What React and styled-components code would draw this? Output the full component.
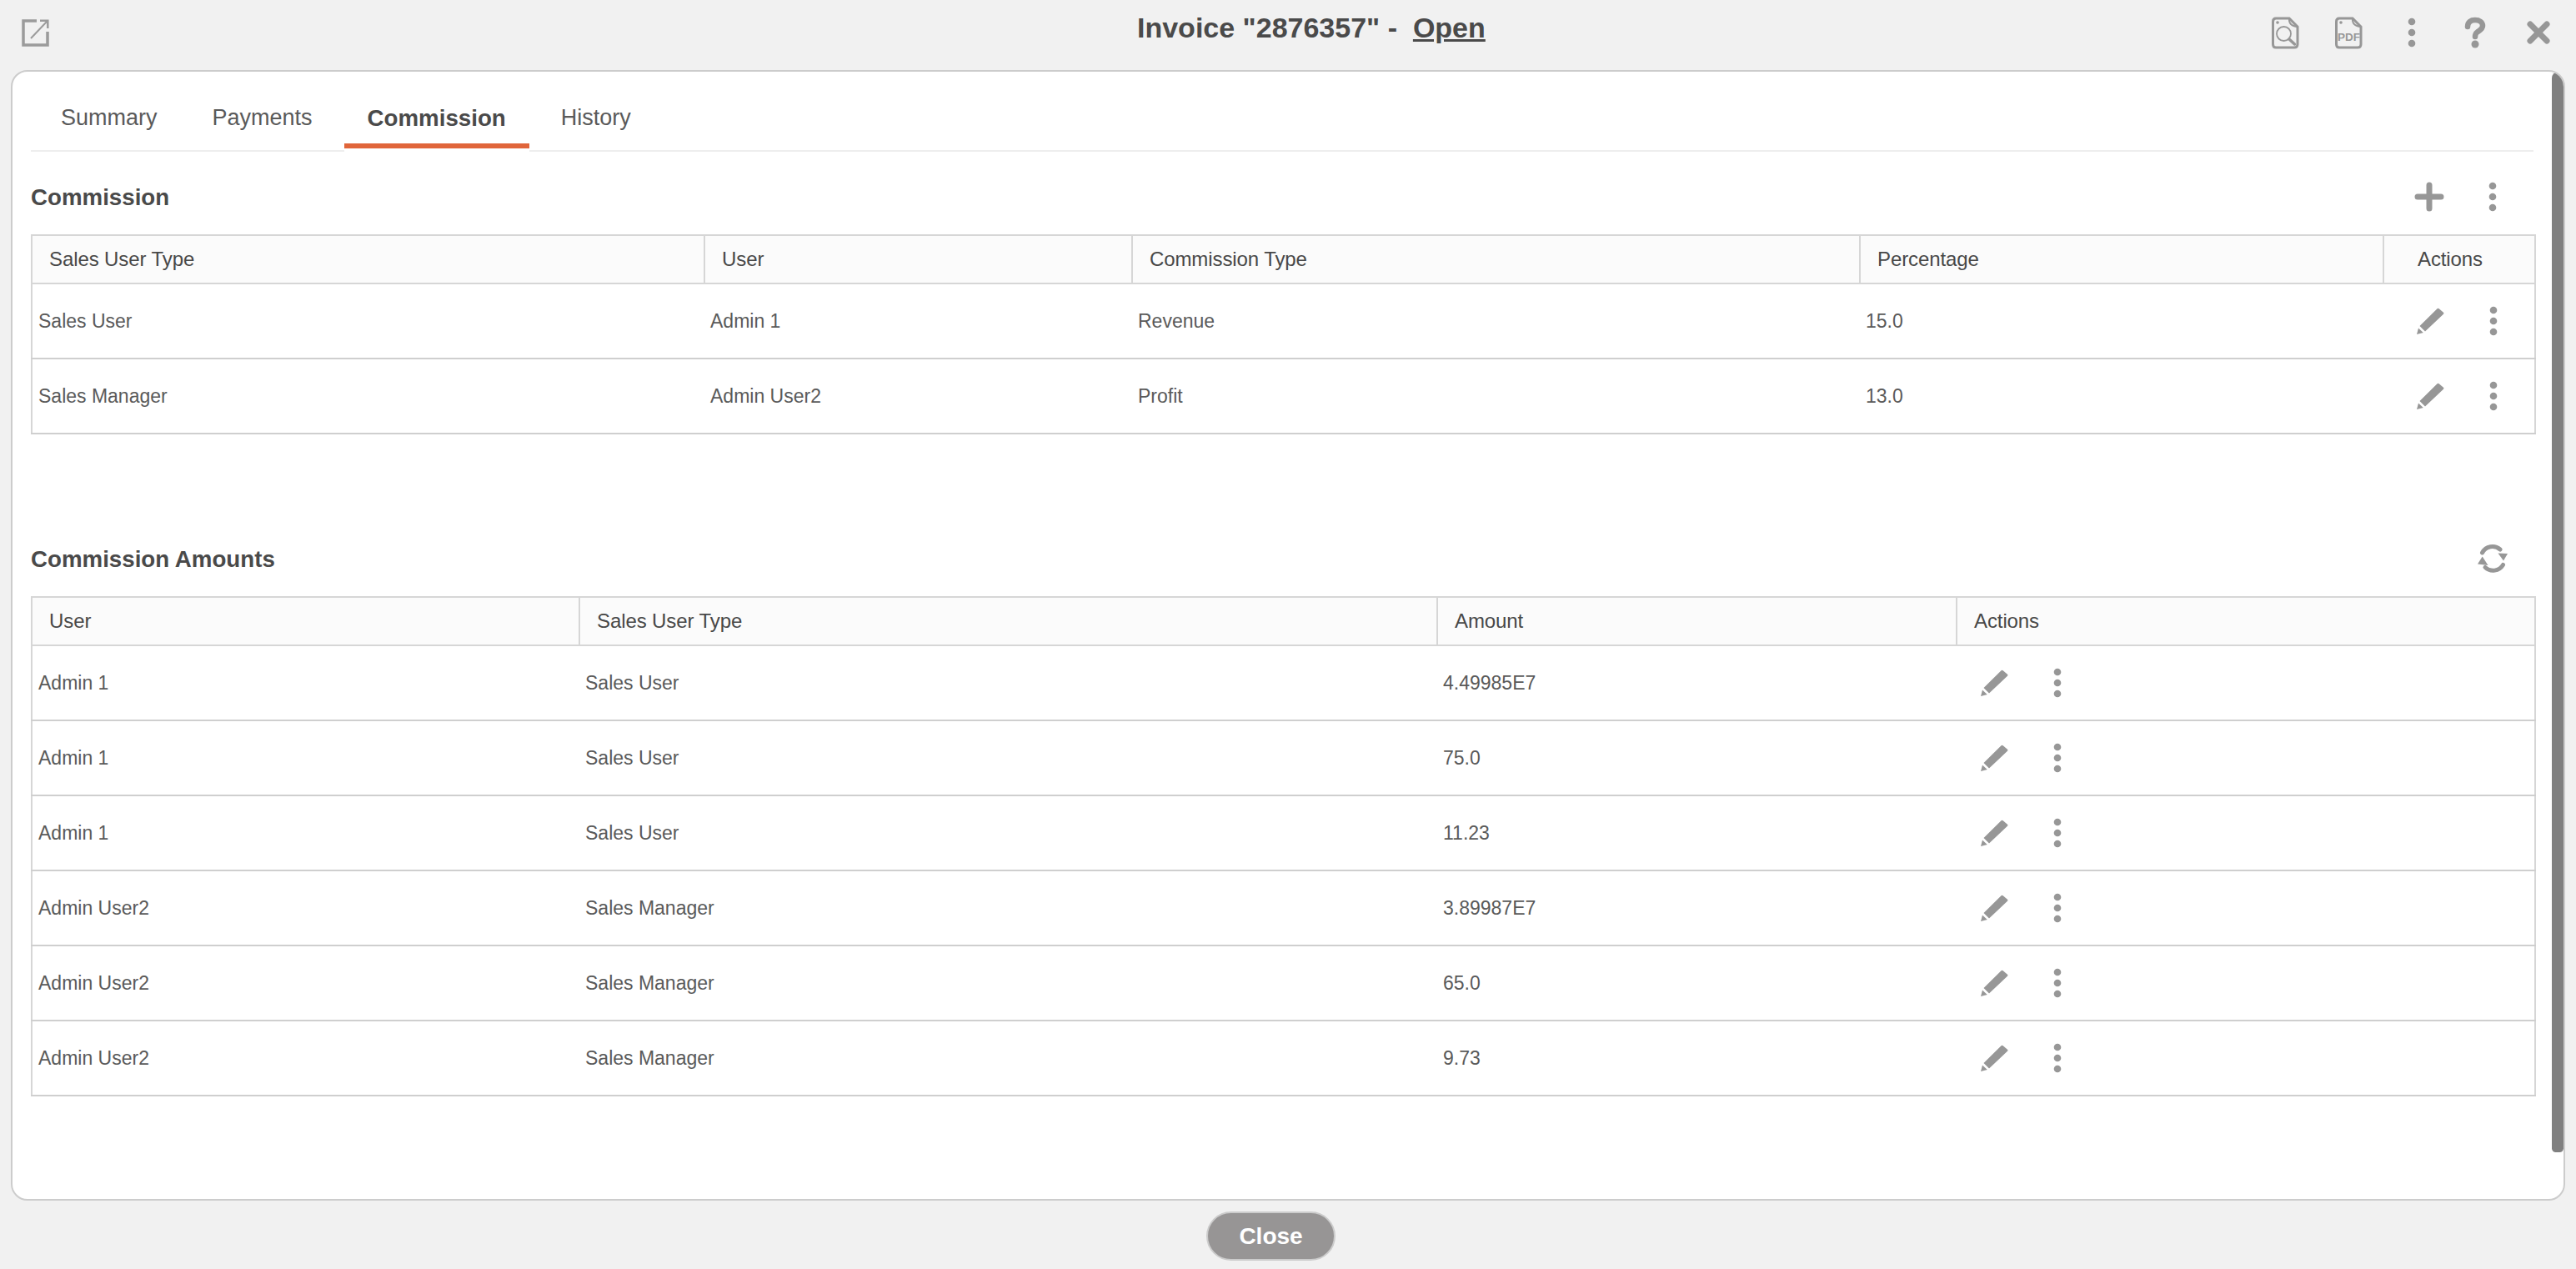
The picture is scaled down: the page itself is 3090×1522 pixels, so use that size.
import React from 'react';
import styled, { createGlobalStyle } from 'styled-components';

const GlobalStyle = createGlobalStyle`
    html, body {
        margin: 0;
        height: 100%;
        overflow: hidden;
        background: #f1f1f1;
    }
    body {
        font-family: "Liberation Sans", Arial, sans-serif;
        color: #555;
    }
`;

const Page = styled.div`
    display: flex;
    flex-direction: column;
    height: 1522px;
`;

const TopBar = styled.header`
    display: flex;
    align-items: center;
    height: 84px;
    padding: 0 7px 6px 26px;
    box-sizing: border-box;
    flex-shrink: 0;
`;

const Title = styled.h1`
    align-self: flex-start;
    margin: 0 0 0 1305px;
    font-size: 34px;
    line-height: 66px;
    font-weight: 700;
    color: #4a4a4a;
    white-space: pre;

    a {
        color: inherit;
        text-decoration: underline;
    }
`;

const TopActions = styled.div`
    display: flex;
    align-items: center;
    margin-left: auto;
`;

const IconBox = styled.span`
    display: flex;
    align-items: center;
    justify-content: center;
    width: 76px;
    flex-shrink: 0;
    color: #979797;
`;

const Panel = styled.main`
    position: relative;
    height: 1356px;
    margin: 0 13px;
    padding: 0 36px 0 22px;
    box-sizing: border-box;
    flex-shrink: 0;
    background: #fff;
    border: 2px solid #ccc;
    border-radius: 20px;
    overflow: hidden;
`;

const ScrollThumb = styled.div`
    position: absolute;
    top: 0;
    right: 0;
    width: 14px;
    height: 1296px;
    background: #808080;
    border-radius: 10px 8px 6px 6px;
`;

const TabBar = styled.nav`
    display: flex;
    gap: 10px;
    height: 96px;
    padding: 0 0 2px 8px;
    box-sizing: border-box;
    border-bottom: 2px solid #eee;
`;

const Tab = styled.div`
    display: flex;
    align-items: center;
    height: 92px;
    padding: 25px 28px 0;
    box-sizing: border-box;
    font-size: ${p => (p.$active ? 27.7 : 27)}px;
    font-weight: ${p => (p.$active ? 700 : 400)};
    color: ${p => (p.$active ? '#4a4a4a' : '#5a5a5a')};
    border-bottom: 6px solid ${p => (p.$active ? '#e0653a' : 'transparent')};
    box-shadow: ${p => (p.$active ? '0 5px 0 #fff' : 'none')};
`;

const SectionHead = styled.div`
    display: flex;
    align-items: center;
    justify-content: space-between;
    height: 91px;
    margin-top: ${p => p.$top}px;
    padding-right: 11px;
`;

const SectionTitle = styled.h2`
    margin: 0;
    padding-top: 2px;
    font-size: 27.7px;
    font-weight: 700;
    color: #4a4a4a;
`;

const HeadActions = styled.div`
    display: flex;
    align-items: center;
`;

const Table = styled.table`
    width: 3003px;
    table-layout: fixed;
    border-collapse: collapse;
    border: 2px solid #d6d6d6;
`;

const HeadRow = styled.tr`
    height: 58px;
    background: #fbfbfb;
`;

const Th = styled.th`
    padding: 0 ${p => (p.$center ? '22px' : '0')} 0 ${p => (p.$center ? '0' : '20px')};
    border: 2px solid #d6d6d6;
    font-size: 24px;
    font-weight: 400;
    letter-spacing: -0.1px;
    text-align: ${p => (p.$center ? 'center' : 'left')};
    color: #484848;
`;

const Row = styled.tr`
    height: 90px;
    border-bottom: 2px solid #cfcfcf;
`;

const Td = styled.td`
    padding: 0 0 0 7px;
    font-size: 23px;
    color: #5a5a5a;
`;

const RowActions = styled.div`
    display: flex;
    align-items: center;
    padding-left: ${p => p.$inset}px;
`;

const CloseBar = styled.footer`
    display: flex;
    justify-content: center;
    padding: 13px 41px 0 0;
`;

const CloseButton = styled.button`
    width: 155px;
    height: 59px;
    padding: 0;
    border: 2px solid #ccc;
    border-radius: 30px;
    background: #979595;
    font-family: inherit;
    font-size: 28px;
    font-weight: 700;
    color: #fff;
`;

const ExternalIcon = () => (
    <svg width="33" height="33" viewBox="0 0 33 33" fill="none" stroke="#9b9b9b" strokeWidth="3">
        <path d="M18 2H2V31H31V15" strokeWidth="3.5" />
        <path d="M11 23L30 3" strokeWidth="2" />
        <path d="M22 1.7H31.300V11" strokeWidth="2.500" />
    </svg>
);

const DocShape = () => (
    <>
        <path d="M5 2H21L31 12V33Q31 37 27 37H5Q1.500 37 1.500 33V6Q1.500 2 5 2Z" fill="none" stroke="currentColor" strokeWidth="3" />
        <path d="M21 2Q20 11 31 12" fill="none" stroke="currentColor" strokeWidth="2" />
        <circle cx="7" cy="7" r="1.800" fill="currentColor" />
    </>
);

const DocSearchIcon = () => (
    <svg width="33" height="39" viewBox="0 0 33 39">
        <DocShape />
        <circle cx="14.500" cy="20.500" r="8.500" fill="none" stroke="currentColor" strokeWidth="1.800" />
        <path d="M21 27L27.500 33" stroke="currentColor" strokeWidth="3.500" strokeLinecap="round" />
    </svg>
);

const PdfIcon = () => (
    <svg width="33" height="39" viewBox="0 0 33 39">
        <DocShape />
        <text x="16.500" y="29" textAnchor="middle" fontSize="13.500" fontWeight="700" fontFamily="Liberation Sans, Arial, sans-serif" fill="currentColor">PDF</text>
    </svg>
);

const DotsIcon = () => (
    <svg width="10" height="36" viewBox="0 0 10 36" fill="currentColor">
        <circle cx="5" cy="5" r="4.300" />
        <circle cx="5" cy="18" r="4.300" />
        <circle cx="5" cy="31" r="4.300" />
    </svg>
);

const QuestionIcon = () => (
    <svg width="26" height="38" viewBox="0 0 26 38" fill="none">
        <path d="M4 12C4 6 8 4 13 4C18 4 22 6.500 22 11C22 15 18 16.500 15.500 18.500C13.500 20 13 21.500 13 24" stroke="currentColor" strokeWidth="6.500" strokeLinecap="round" />
        <circle cx="13" cy="33" r="4.500" fill="currentColor" />
    </svg>
);

const CloseIcon = () => (
    <svg width="28" height="28" viewBox="0 0 28 28" stroke="currentColor" strokeWidth="7" strokeLinecap="round">
        <path d="M4 4L24 24M24 4L4 24" />
    </svg>
);

const PlusIcon = () => (
    <svg width="36" height="36" viewBox="0 0 36 36" stroke="currentColor" strokeWidth="7" strokeLinecap="round">
        <path d="M18 4V32M4 18H32" />
    </svg>
);

const PencilIcon = () => (
    <svg width="33" height="32" viewBox="0 0 33 32" fill="currentColor">
        <path d="M3.500 22L24.500 1.300Q25.500 0.300 26.700 1.200L32 5.700Q33 6.700 32 7.800L10 28.500Z" />
        <path d="M0 32L2 24.500L7.800 30Z" />
    </svg>
);

const RefreshIcon = () => (
    <svg width="36" height="36" viewBox="0 0 36 36" fill="currentColor">
        <path d="M5.500 11A14 14 0 0 1 27 7" fill="none" stroke="currentColor" strokeWidth="5" strokeLinecap="round" />
        <path d="M30.500 25.500A14 14 0 0 1 9 28.500" fill="none" stroke="currentColor" strokeWidth="5" strokeLinecap="round" />
        <path d="M36 12L24.500 11.500L31 20.500Z" />
        <path d="M0 24.500L5.700 15.500L12.500 26Z" />
    </svg>
);

const commissions = [
    ['Sales User', 'Admin 1', 'Revenue', '15.0'],
    ['Sales Manager', 'Admin User2', 'Profit', '13.0'],
];

const amounts = [
    ['Admin 1', 'Sales User', '4.49985E7'],
    ['Admin 1', 'Sales User', '75.0'],
    ['Admin 1', 'Sales User', '11.23'],
    ['Admin User2', 'Sales Manager', '3.89987E7'],
    ['Admin User2', 'Sales Manager', '65.0'],
    ['Admin User2', 'Sales Manager', '9.73'],
];

const EditActions = ({ inset }) => (
    <RowActions $inset={inset}>
        <IconBox>
            <PencilIcon />
        </IconBox>
        <IconBox>
            <DotsIcon />
        </IconBox>
    </RowActions>
);

function App() {
    return (
        <Page>
            <GlobalStyle />
            <TopBar>
                <ExternalIcon />
                <Title>
                    Invoice "2876357" -{'  '}
                    <a href="#open">Open</a>
                </Title>
                <TopActions>
                    <IconBox><DocSearchIcon /></IconBox>
                    <IconBox><PdfIcon /></IconBox>
                    <IconBox><DotsIcon /></IconBox>
                    <IconBox><QuestionIcon /></IconBox>
                    <IconBox><CloseIcon /></IconBox>
                </TopActions>
            </TopBar>

            <Panel>
                <ScrollThumb />
                <TabBar>
                    <Tab>Summary</Tab>
                    <Tab>Payments</Tab>
                    <Tab $active>Commission</Tab>
                    <Tab>History</Tab>
                </TabBar>

                <SectionHead $top={8}>
                    <SectionTitle>Commission</SectionTitle>
                    <HeadActions>
                        <IconBox><PlusIcon /></IconBox>
                        <IconBox><DotsIcon /></IconBox>
                    </HeadActions>
                </SectionHead>
                <Table>
                    <colgroup>
                        <col width="807" />
                        <col width="513" />
                        <col width="873" />
                        <col width="628" />
                        <col width="182" />
                    </colgroup>
                    <thead>
                        <HeadRow>
                            <Th>Sales User Type</Th>
                            <Th>User</Th>
                            <Th>Commission Type</Th>
                            <Th>Percentage</Th>
                            <Th $center>Actions</Th>
                        </HeadRow>
                    </thead>
                    <tbody>
                        {commissions.map(item => (
                            <Row key={item[0]}>
                                {item.map(text => (
                                    <Td key={text}>{text}</Td>
                                ))}
                                <Td>
                                    <EditActions inset={11} />
                                </Td>
                            </Row>
                        ))}
                    </tbody>
                </Table>

                <SectionHead $top={103}>
                    <SectionTitle>Commission Amounts</SectionTitle>
                    <HeadActions>
                        <IconBox><RefreshIcon /></IconBox>
                    </HeadActions>
                </SectionHead>
                <Table>
                    <colgroup>
                        <col width="657" />
                        <col width="1029" />
                        <col width="623" />
                        <col width="694" />
                    </colgroup>
                    <thead>
                        <HeadRow>
                            <Th>User</Th>
                            <Th>Sales User Type</Th>
                            <Th>Amount</Th>
                            <Th>Actions</Th>
                        </HeadRow>
                    </thead>
                    <tbody>
                        {amounts.map(item => (
                            <Row key={item[2]}>
                                {item.map(text => (
                                    <Td key={text}>{text}</Td>
                                ))}
                                <Td>
                                    <EditActions inset={0} />
                                </Td>
                            </Row>
                        ))}
                    </tbody>
                </Table>
            </Panel>

            <CloseBar>
                <CloseButton>Close</CloseButton>
            </CloseBar>
        </Page>
    );
}

export default App;
